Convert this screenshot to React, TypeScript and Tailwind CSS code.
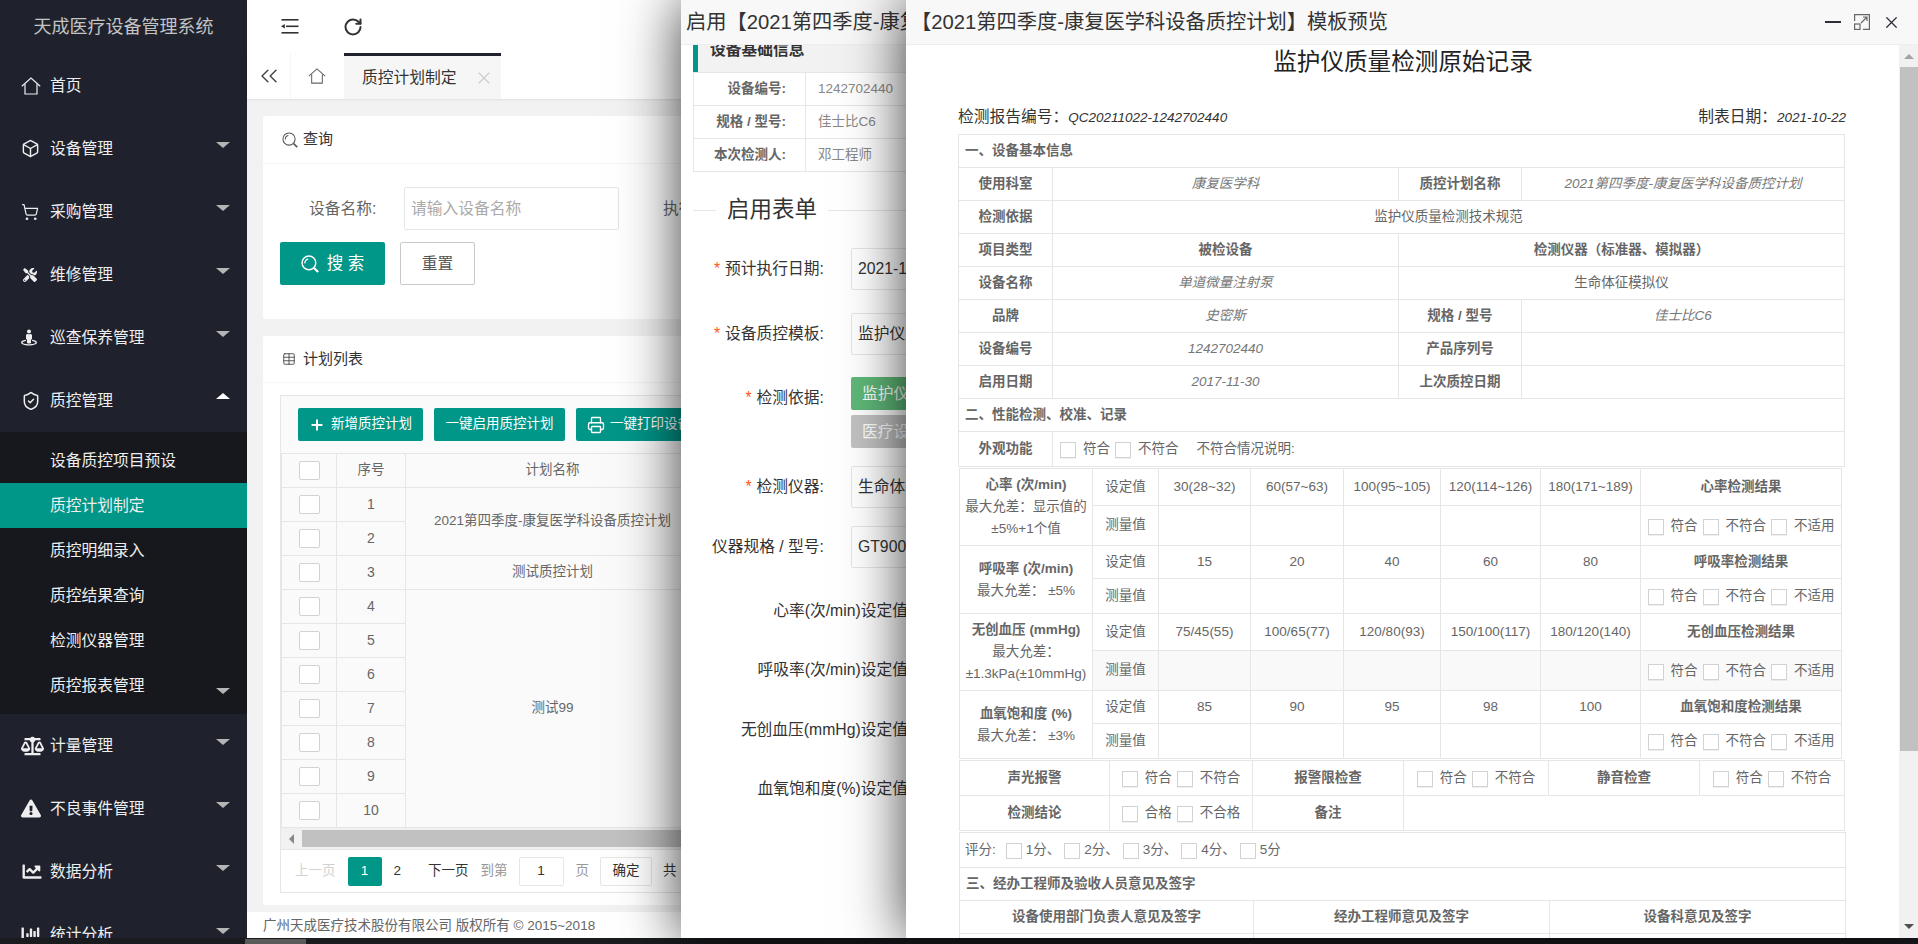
import type { ReactNode } from "react";
import { ChevronsLeft, Plus, Printer, RotateCw, ShieldCheck, ShoppingCart, Box, Table, X } from "lucide-react";
import { FaBalanceScale, FaChartBar, FaChartLine, FaExclamationTriangle, FaStreetView, FaTools } from "react-icons/fa";

function HomeIcon({ className }: { className: string }) {
  return (
    <svg viewBox="0 0 20 18" fill="none" stroke="currentColor" strokeWidth="1.2" className={className}>
      <path d="M0.8 9.2 10 1l9.2 8.2" />
      <path d="M4 7v10h12V7" />
    </svg>
  );
}

function SearchIcon({ className, width = 1.3 }: { className: string; width?: number }) {
  return (
    <svg viewBox="0 0 20 20" fill="none" stroke="currentColor" strokeWidth={width} className={className}>
      <circle cx="8.8" cy="8.8" r="7.6" />
      <path d="M4.4 9.4a4.4 4.4 0 0 1 3.6-5" />
      <path d="M14.4 14.4 19 19" strokeWidth={width + 0.8} />
    </svg>
  );
}

const menuTop: { name: string; icon: ReactNode; arrow?: boolean }[] = [
  { name: "首页", icon: <HomeIcon className="h-[18px] w-[20px]" /> },
  { name: "设备管理", icon: <Box className="h-[19px] w-[19px]" strokeWidth={1.8} />, arrow: true },
  { name: "采购管理", icon: <ShoppingCart className="h-[18px] w-[18px]" strokeWidth={1.6} />, arrow: true },
  { name: "维修管理", icon: <FaTools className="ml-[2px] h-[14px] w-[14px]" />, arrow: true },
  { name: "巡查保养管理", icon: <FaStreetView className="h-[19px] w-[16px]" />, arrow: true },
];

const menuBottom: { name: string; icon: ReactNode }[] = [
  { name: "计量管理", icon: <FaBalanceScale className="h-[20px] w-[23px]" /> },
  { name: "不良事件管理", icon: <FaExclamationTriangle className="h-[19px] w-[20px]" /> },
  { name: "数据分析", icon: <FaChartLine className="h-[19px] w-[22px]" /> },
  { name: "统计分析", icon: <FaChartBar className="h-[19px] w-[20px]" /> },
];

const subMenu = ["设备质控项目预设", "质控计划制定", "质控明细录入", "质控结果查询", "检测仪器管理", "质控报表管理"];

function ArrowDown() {
  return <span className="ml-auto mb-[7px] mr-[17px] h-0 w-0 border-x-[7px] border-t-[6px] border-x-transparent border-t-[#b5b5b5]" />;
}

function MenuItem({ name, icon, arrow, up }: { name: string; icon: ReactNode; arrow?: boolean; up?: boolean }) {
  return (
    <div className="flex h-[63px] shrink-0 items-center text-[15.75px] text-[#eeeeee]">
      <span className="flex w-[50px] shrink-0 justify-start pl-[21px]">{icon}</span>
      <span>{name}</span>
      {arrow && !up && <ArrowDown />}
      {up && <span className="ml-auto mb-[9px] mr-[17px] h-0 w-0 border-x-[7px] border-b-[6px] border-x-transparent border-b-white" />}
    </div>
  );
}

function Sidebar() {
  return (
    <aside className="flex h-full w-[247px] shrink-0 flex-col overflow-hidden bg-[#1f222d]">
      <div className="flex h-[54px] shrink-0 items-center justify-center text-[18px] text-[#c4c4c4]">天成医疗设备管理系统</div>
      {menuTop.map((m) => (
        <MenuItem key={m.name} {...m} />
      ))}
      <MenuItem name="质控管理" icon={<ShieldCheck className="h-[20px] w-[20px]" strokeWidth={1.8} />} up />
      <div className="flex h-[282px] shrink-0 flex-col bg-[#17181e] pt-[6px]">
        {subMenu.map((s, i) => (
          <div key={s} className={`flex h-[45px] shrink-0 items-center pl-[50px] text-[15.75px] text-[#eeeeee] ${i === 1 ? "bg-[#009688]" : ""}`}>
            <span>{s}</span>
            {i === 5 && <span className="ml-auto mt-[10px] mr-[17px] h-0 w-0 border-x-[7px] border-t-[6px] border-x-transparent border-t-[#b5b5b5]" />}
          </div>
        ))}
      </div>
      {menuBottom.map((m) => (
        <MenuItem key={m.name} {...m} arrow />
      ))}
    </aside>
  );
}

function TableCheck() {
  return <span className="mx-auto block h-[19px] w-[21px] rounded-[2px] border border-[#d2d2d2] bg-white" />;
}

function PlanCard() {
  const rows = [1, 2, 3, 4, 5, 6, 7, 8, 9, 10];
  const td = "border border-[#e6e6e6] text-center";
  return (
    <section className="mt-[17px] h-[569px] shrink-0 rounded-[2px] bg-white">
      <div className="flex h-[47px] items-center border-b border-[#f6f6f6] pl-[19px] text-[15px] text-[#333]">
        <Table className="mr-[7px] h-[14px] w-[14px] text-[#444]" strokeWidth={1.5} />
        计划列表
      </div>
      <div className="mx-[17px] mt-[12px] h-[498px] overflow-hidden border border-[#e6e6e6]">
        <div className="flex h-[57px] items-start gap-[11px] bg-[#fafafa] pl-[17px] pt-[12px] text-[13.5px] text-white">
          <span className="flex h-[33px] w-[125px] items-center justify-center gap-[6px] rounded-[2px] bg-[#009688]">
            <Plus className="h-[16px] w-[16px]" strokeWidth={3} />
            新增质控计划
          </span>
          <span className="flex h-[33px] w-[131px] items-center justify-center rounded-[2px] bg-[#009688]">一键启用质控计划</span>
          <span className="flex h-[33px] w-[170px] items-center gap-[5px] rounded-[2px] bg-[#009688] pl-[11px]">
            <Printer className="h-[18px] w-[18px]" strokeWidth={1.8} />
            一键打印设备质控计划
          </span>
        </div>
        <table className="w-[1000px] table-fixed border-collapse bg-[#fafafa] text-[13.5px] text-[#666]">
          <colgroup>
            <col className="w-[55px]" />
            <col className="w-[69px]" />
            <col className="w-[294px]" />
            <col />
          </colgroup>
          <tbody>
            <tr className="h-[34px]">
              <td className={td}><TableCheck /></td>
              <td className={td}>序号</td>
              <td className={td}>计划名称</td>
              <td className={td} />
            </tr>
            {rows.map((n) => (
              <tr key={n} className="h-[34px]">
                <td className={td}><TableCheck /></td>
                <td className={`${td} text-[14px]`}>{n}</td>
                {n === 1 && <td className={td} rowSpan={2}>2021第四季度-康复医学科设备质控计划</td>}
                {n === 3 && <td className={td}>测试质控计划</td>}
                {n === 4 && <td className={td} rowSpan={7}>测试99</td>}
                {(n === 1 || n === 3 || n === 4) && <td className={td} rowSpan={n === 1 ? 2 : n === 3 ? 1 : 7} />}
              </tr>
            ))}
          </tbody>
        </table>
        <div className="flex h-[21px] items-center bg-[#f1f1f1]">
          <span className="ml-[8px] h-0 w-0 border-y-[5px] border-r-[5px] border-y-transparent border-r-[#888]" />
          <span className="ml-[8px] h-[17px] w-[900px] bg-[#c1c1c1]" />
        </div>
        <div className="flex h-[44px] items-center border-t border-[#e6e6e6] pl-[14px] text-[13.5px] text-[#333]">
          <span className="text-[#d2d2d2]">上一页</span>
          <span className="ml-[12px] flex h-[29px] w-[34px] items-center justify-center rounded-[2px] bg-[#009688] text-white">1</span>
          <span className="ml-[12px]">2</span>
          <span className="ml-[27px]">下一页</span>
          <span className="ml-[12px] text-[#999]">到第</span>
          <span className="ml-[11px] flex h-[29px] w-[45px] items-center justify-center rounded-[2px] border border-[#e6e6e6]">1</span>
          <span className="ml-[12px] text-[#999]">页</span>
          <span className="ml-[11px] flex h-[29px] w-[52px] items-center justify-center rounded-[2px] border border-[#e6e6e6]">确定</span>
          <span className="ml-[11px]">共</span>
          <span className="ml-[20px]">15 条</span>
        </div>
      </div>
    </section>
  );
}

function MainArea() {
  return (
    <div className="flex h-full min-w-0 flex-1 flex-col bg-[#f2f2f2]">
      <header className="flex h-[53px] shrink-0 items-center bg-white text-[#333]">
        <svg viewBox="0 0 18 15" className="ml-[34px] h-[15px] w-[18px]" fill="currentColor">
          <rect x="0.5" y="0" width="17" height="1.6" />
          <rect x="5" y="6.5" width="12.5" height="1.6" />
          <rect x="0.5" y="13" width="17" height="1.6" />
          <path d="M0 7.3 3.8 5v4.6z" />
        </svg>
        <RotateCw className="ml-[44px] h-[20px] w-[20px]" strokeWidth={2.4} />
      </header>
      <div className="flex h-[46px] shrink-0 items-stretch bg-white shadow-[0_1px_2px_rgba(0,0,0,0.08)]">
        <span className="flex w-[44px] items-center justify-center border-r border-[#f6f6f6]">
          <ChevronsLeft className="h-[28px] w-[28px] text-[#444]" strokeWidth={1.2} />
        </span>
        <span className="flex w-[52px] items-center justify-center text-[#666]">
          <HomeIcon className="h-[16px] w-[18px]" />
        </span>
        <span className="ml-px flex w-[157px] items-center border-t-[3px] border-[#1f222d] bg-[#f6f6f6] pl-[18px] text-[15.75px] text-[#333]">
          质控计划制定
          <X className="ml-[17px] h-[20px] w-[20px] text-[#cccccc]" strokeWidth={1.4} />
        </span>
      </div>
      <main className="flex min-h-0 flex-1 flex-col px-[16px] pt-[17px]">
        <section className="h-[203px] shrink-0 rounded-[2px] bg-white">
          <div className="flex h-[48px] items-center border-b border-[#f6f6f6] pl-[19px] text-[15px] text-[#333]">
            <SearchIcon className="mr-[5px] h-[16px] w-[16px] text-[#555]" />
            查询
          </div>
          <div className="flex h-[43px] items-center pl-[46px] mt-[23px] text-[15.75px] text-[#666]">
            <span className="w-[95px]">设备名称:</span>
            <span className="flex h-[43px] w-[215px] items-center rounded-[2px] border border-[#e6e6e6] pl-[6px] text-[#aaa]">请输入设备名称</span>
            <span className="ml-[44px]">执行科室:</span>
          </div>
          <div className="mt-[12px] flex gap-[15px] pl-[17px]">
            <span className="flex h-[43px] w-[105px] items-center justify-center gap-[8px] rounded-[2px] bg-[#009688] text-[16.5px] text-white">
              <SearchIcon className="h-[18px] w-[18px]" width={1.6} />
              搜 索
            </span>
            <span className="flex h-[43px] w-[75px] items-center justify-center rounded-[2px] border border-[#c9c9c9] text-[15.75px] text-[#555]">重置</span>
          </div>
        </section>
        <PlanCard />
      </main>
      <footer className="flex h-[26px] shrink-0 items-center bg-white pl-[16px] pt-[2px] text-[13.5px] text-[#666]">广州天成医疗技术股份有限公司 版权所有 © 2015~2018</footer>
    </div>
  );
}

function FormRow({ label, required, className, children }: { label: string; required?: boolean; className: string; children?: ReactNode }) {
  return (
    <div className={`flex shrink-0 ${className}`}>
      <label className="w-[170px] shrink-0 pr-[27px] pt-[9px] text-right text-[15.75px] whitespace-nowrap text-[#333]">
        {required && <span className="mr-[5px] text-[#ff5722]">*</span>}
        {label}:
      </label>
      {children}
    </div>
  );
}

function FormInput({ value }: { value: string }) {
  return <span className="flex h-full w-[300px] shrink-0 items-center rounded-[2px] border border-[#e6e6e6] pl-[6px] text-[15.75px] whitespace-nowrap text-[#333]">{value}</span>;
}

function EnableWindow() {
  const info = [
    ["设备编号", "1242702440"],
    ["规格 / 型号", "佳士比C6"],
    ["本次检测人", "邓工程师"],
  ];
  const setRows = [
    { label: "心率(次/min)设定值", top: "mt-[28px]" },
    { label: "呼吸率(次/min)设定值", top: "mt-[29px]" },
    { label: "无创血压(mmHg)设定值", top: "mt-[30px]" },
    { label: "血氧饱和度(%)设定值", top: "mt-[29px]" },
  ];
  return (
    <div className="absolute left-[681px] top-0 flex h-[938px] w-[225px] flex-col overflow-hidden bg-white shadow-[1px_1px_56px_rgba(0,0,0,0.8)]">
      <div className="flex h-[45px] shrink-0 items-center border-b border-[#eeeeee] bg-[#f8f8f8] pl-[5px] text-[20.25px] whitespace-nowrap text-[#333]">
        启用【2021第四季度-康复医学科设备质控计划】
      </div>
      <div className="flex min-h-0 flex-1 flex-col overflow-hidden pl-[12px]">
        <div className="-mt-[17px] flex h-[44px] shrink-0 items-center border-l-[5px] border-[#009688] bg-[#f2f2f2] pl-[12px] text-[15.75px] font-bold text-[#333]">
          设备基础信息
        </div>
        <table className="w-[488px] shrink-0 table-fixed border-collapse text-[13.5px]">
          <colgroup>
            <col className="w-[112px]" />
            <col />
          </colgroup>
          <tbody>
            {info.map(([k, v]) => (
              <tr key={k} className="h-[33px]">
                <td className="border border-[#e6e6e6] pr-[19px] text-right font-bold text-[#666]">{k}:</td>
                <td className="border border-[#e6e6e6] pl-[12px] text-[#888]">{v}</td>
              </tr>
            ))}
          </tbody>
        </table>
        <div className="mt-[23px] flex h-[30px] shrink-0 items-center">
          <span className="h-px w-[23px] bg-[#e6e6e6]" />
          <span className="mx-[11px] text-[22.5px] text-[#333]">启用表单</span>
          <span className="h-px flex-1 bg-[#e6e6e6]" />
        </div>
        <div className="-ml-[12px] flex flex-col">
          <FormRow label="预计执行日期" required className="mt-[23px] h-[42px]"><FormInput value="2021-10-22" /></FormRow>
          <FormRow label="设备质控模板" required className="mt-[23px] h-[42px]"><FormInput value="监护仪质量检测原始记录" /></FormRow>
          <FormRow label="检测依据" required className="mt-[22px] h-[71px]">
            <div className="flex shrink-0 flex-col gap-[5px] text-[15.75px] text-white">
              <span className="flex h-[33px] w-[300px] items-center rounded-[2px] bg-[#5fb878] pl-[11px]">监护仪质量检测技术规范</span>
              <span className="flex h-[33px] w-[300px] items-center rounded-[2px] bg-[#c2c2c2] pl-[11px]">医疗设备检测规范</span>
            </div>
          </FormRow>
          <FormRow label="检测仪器" required className="mt-[18px] h-[42px]"><FormInput value="生命体征模拟仪" /></FormRow>
          <FormRow label="仪器规格 / 型号" className="mt-[18px] h-[42px]"><FormInput value="GT9000" /></FormRow>
          {setRows.map((r) => (
            <div key={r.label} className={`flex h-[30px] w-[227px] shrink-0 items-center justify-end text-[15.75px] whitespace-nowrap text-[#333] ${r.top}`}>
              {r.label}
            </div>
          ))}
        </div>
      </div>
    </div>
  );
}

function Check({ label }: { label: string }) {
  return (
    <span className="inline-flex items-center gap-[7px] whitespace-nowrap">
      <span className="mt-[2px] h-[16px] w-[16px] shrink-0 border border-[#d2d2d2] bg-white shadow-[0_1px_0_rgba(0,0,0,0.06)]" />
      {label}
    </span>
  );
}

function Checks({ items }: { items: string[] }) {
  return (
    <span className="inline-flex items-center gap-[5px] align-middle">
      {items.map((c) => (
        <Check key={c} label={c} />
      ))}
    </span>
  );
}

const cell = "border border-[#e6e6e6] text-center";
const bold = "border border-[#e6e6e6] text-center font-bold";
const ital = "border border-[#e6e6e6] text-center italic text-[#777]";
const section = "border border-[#e6e6e6] pl-[6px] text-left font-bold";

const measures = [
  {
    title: "心率 (次/min)",
    lines: ["最大允差：显示值的", "±5%+1个值"],
    values: ["30(28~32)", "60(57~63)", "100(95~105)", "120(114~126)", "180(171~189)"],
    result: "心率检测结果",
    h: ["h-[37px]", "h-[40px]"],
  },
  {
    title: "呼吸率 (次/min)",
    lines: ["最大允差： ±5%"],
    values: ["15", "20", "40", "60", "80"],
    result: "呼吸率检测结果",
    h: ["h-[33px]", "h-[35px]"],
  },
  {
    title: "无创血压 (mmHg)",
    lines: ["最大允差：", "±1.3kPa(±10mmHg)"],
    values: ["75/45(55)", "100/65(77)", "120/80(93)", "150/100(117)", "180/120(140)"],
    result: "无创血压检测结果",
    h: ["h-[37px]", "h-[40px]"],
    shaded: true,
  },
  {
    title: "血氧饱和度 (%)",
    lines: ["最大允差： ±3%"],
    values: ["85", "90", "95", "98", "100"],
    result: "血氧饱和度检测结果",
    h: ["h-[33px]", "h-[35px]"],
  },
];

function RecordTable() {
  return (
    <div className="text-[13.5px] text-[#666]">
      <table className="w-[886px] table-fixed border-collapse">
        <colgroup>
          <col className="w-[94px]" />
          <col className="w-[346px]" />
          <col className="w-[123px]" />
          <col className="w-[323px]" />
        </colgroup>
        <tbody>
          <tr className="h-[33px]"><td colSpan={4} className={section}>一、设备基本信息</td></tr>
          <tr className="h-[33px]">
            <td className={bold}>使用科室</td>
            <td className={ital}>康复医学科</td>
            <td className={bold}>质控计划名称</td>
            <td className={ital}>2021第四季度-康复医学科设备质控计划</td>
          </tr>
          <tr className="h-[33px]">
            <td className={bold}>检测依据</td>
            <td colSpan={3} className={cell}>监护仪质量检测技术规范</td>
          </tr>
          <tr className="h-[33px]">
            <td className={bold}>项目类型</td>
            <td className={bold}>被检设备</td>
            <td colSpan={2} className={bold}>检测仪器（标准器、模拟器）</td>
          </tr>
          <tr className="h-[33px]">
            <td className={bold}>设备名称</td>
            <td className={ital}>单道微量注射泵</td>
            <td colSpan={2} className={cell}>生命体征模拟仪</td>
          </tr>
          <tr className="h-[33px]">
            <td className={bold}>品牌</td>
            <td className={ital}>史密斯</td>
            <td className={bold}>规格 / 型号</td>
            <td className={ital}>佳士比C6</td>
          </tr>
          <tr className="h-[33px]">
            <td className={bold}>设备编号</td>
            <td className={ital}>1242702440</td>
            <td className={bold}>产品序列号</td>
            <td className={cell} />
          </tr>
          <tr className="h-[33px]">
            <td className={bold}>启用日期</td>
            <td className={ital}>2017-11-30</td>
            <td className={bold}>上次质控日期</td>
            <td className={cell} />
          </tr>
          <tr className="h-[33px]"><td colSpan={4} className={section}>二、性能检测、校准、记录</td></tr>
          <tr className="h-[35px]">
            <td className={bold}>外观功能</td>
            <td colSpan={3} className="border border-[#e6e6e6] pl-[7px]">
              <Checks items={["符合", "不符合"]} />
              <span className="ml-[18px]">不符合情况说明:</span>
            </td>
          </tr>
        </tbody>
      </table>
      <table className="ml-px mt-px w-[882px] table-fixed border-collapse">
        <colgroup>
          <col className="w-[133px]" />
          <col className="w-[66px]" />
          <col className="w-[92px]" />
          <col className="w-[93px]" />
          <col className="w-[97px]" />
          <col className="w-[100px]" />
          <col className="w-[100px]" />
          <col className="w-[201px]" />
        </colgroup>
        <tbody>
          {measures.flatMap((m) => [
            <tr key={m.title} className={m.h[0]}>
              <td rowSpan={2} className="border border-[#e6e6e6] text-center leading-[22px]">
                <div className="font-bold">{m.title}</div>
                {m.lines.map((l) => (
                  <div key={l} className="whitespace-nowrap">{l}</div>
                ))}
              </td>
              <td className={cell}>设定值</td>
              {m.values.map((v) => (
                <td key={v} className={`${cell} whitespace-nowrap`}>{v}</td>
              ))}
              <td className={bold}>{m.result}</td>
            </tr>,
            <tr key={m.title + "-m"} className={`${m.h[1]} ${m.shaded ? "bg-[#f9f9f9]" : ""}`}>
              <td className={cell}>测量值</td>
              {m.values.map((v) => (
                <td key={v} className={cell} />
              ))}
              <td className={cell}><Checks items={["符合", "不符合", "不适用"]} /></td>
            </tr>,
          ])}
        </tbody>
      </table>
      <table className="ml-px mt-px w-[885px] table-fixed border-collapse">
        <colgroup>
          <col className="w-[150px]" />
          <col className="w-[143px]" />
          <col className="w-[151px]" />
          <col className="w-[145px]" />
          <col className="w-[151px]" />
          <col className="w-[145px]" />
        </colgroup>
        <tbody>
          <tr className="h-[35px]">
            <td className={bold}>声光报警</td>
            <td className={cell}><Checks items={["符合", "不符合"]} /></td>
            <td className={bold}>报警限检查</td>
            <td className={cell}><Checks items={["符合", "不符合"]} /></td>
            <td className={bold}>静音检查</td>
            <td className={cell}><Checks items={["符合", "不符合"]} /></td>
          </tr>
          <tr className="h-[35px]">
            <td className={bold}>检测结论</td>
            <td className={cell}><Checks items={["合格", "不合格"]} /></td>
            <td className={bold}>备注</td>
            <td colSpan={3} className={cell} />
          </tr>
        </tbody>
      </table>
      <table className="ml-px mt-px w-[886px] table-fixed border-collapse">
        <colgroup>
          <col className="w-[294px]" />
          <col className="w-[296px]" />
          <col className="w-[296px]" />
        </colgroup>
        <tbody>
          <tr className="h-[35px]">
            <td colSpan={3} className="border border-[#e6e6e6] pl-[5px]">
              <span className="inline-flex items-center align-middle">
                <span className="mr-[10px]">评分:</span>
                {["1分、", "2分、", "3分、", "4分、", "5分"].map((s) => (
                  <span key={s} className="inline-flex w-[58.5px] items-center gap-[4px] whitespace-nowrap">
                    <span className="mt-[2px] h-[16px] w-[16px] shrink-0 border border-[#d2d2d2] bg-white" />
                    {s}
                  </span>
                ))}
              </span>
            </td>
          </tr>
          <tr className="h-[33px]"><td colSpan={3} className={section}>三、经办工程师及验收人员意见及签字</td></tr>
          <tr className="h-[33px]">
            <td className={bold}>设备使用部门负责人意见及签字</td>
            <td className={bold}>经办工程师意见及签字</td>
            <td className={bold}>设备科意见及签字</td>
          </tr>
          <tr className="h-[60px]">
            <td className={cell} />
            <td className={cell} />
            <td className={cell} />
          </tr>
        </tbody>
      </table>
    </div>
  );
}

function PreviewWindow() {
  return (
    <div className="absolute left-[906px] right-0 top-0 flex h-[938px] flex-col bg-white shadow-[1px_1px_56px_rgba(0,0,0,0.8)]">
      <div className="flex h-[45px] shrink-0 items-center border-b border-[#eeeeee] bg-[#f8f8f8] pl-[5px] text-[20.25px] whitespace-nowrap text-[#333]">
        【2021第四季度-康复医学科设备质控计划】模板预览
        <span className="ml-auto flex items-center text-[#2e2d3c]">
          <span className="h-[2px] w-[16px] bg-[#2e2d3c]" />
          <svg viewBox="0 0 16 16" fill="none" stroke="#666" strokeWidth="1.2" className="ml-[13px] h-[16px] w-[16px]">
            <path d="M0.6 7V0.6h14.8v14.8H9" />
            <rect x="0.6" y="10" width="5.4" height="5.4" />
            <path d="M7 9l6-6M9 3h4v4" />
          </svg>
          <X className="ml-[12px] mr-[17px] h-[19px] w-[19px]" strokeWidth={1.6} />
        </span>
      </div>
      <div className="flex min-h-0 flex-1">
        <div className="min-w-0 flex-1 overflow-hidden pl-[52px]">
          <h1 className="flex h-[36px] w-[890px] items-center justify-center text-[23.6px] text-[#222]">监护仪质量检测原始记录</h1>
          <div className="mt-[24px] flex h-[24px] w-[888px] items-center justify-between text-[15.75px] text-[#333]">
            <span>检测报告编号：<i className="text-[13.5px]">QC20211022-1242702440</i></span>
            <span>制表日期：<i className="text-[13.5px]">2021-10-22</i></span>
          </div>
          <div className="mt-[5px]"><RecordTable /></div>
        </div>
        <div className="flex w-[19px] shrink-0 flex-col items-center bg-[#f1f1f1]">
          <span className="mt-[9px] h-0 w-0 border-x-[5px] border-b-[5px] border-x-transparent border-b-[#a3a3a3]" />
          <span className="mt-[8px] h-[684px] w-[18px] bg-[#c1c1c1]" />
          <span className="mb-[9px] mt-auto h-0 w-0 border-x-[5px] border-t-[5px] border-x-transparent border-t-[#505050]" />
        </div>
      </div>
    </div>
  );
}

export default function App() {
  return (
    <div className="relative flex h-[944px] w-[1918px] flex-col overflow-hidden font-['Liberation_Sans','Noto_Sans_CJK_SC',sans-serif]">
      <div className="flex h-[938px] shrink-0">
        <Sidebar />
        <MainArea />
      </div>
      <div className="flex h-[6px] shrink-0 bg-[#1a1b1f]">
        <span className="ml-[245px] mt-px w-[61px] bg-[#5a5a5a]" />
      </div>
      <EnableWindow />
      <PreviewWindow />
    </div>
  );
}
